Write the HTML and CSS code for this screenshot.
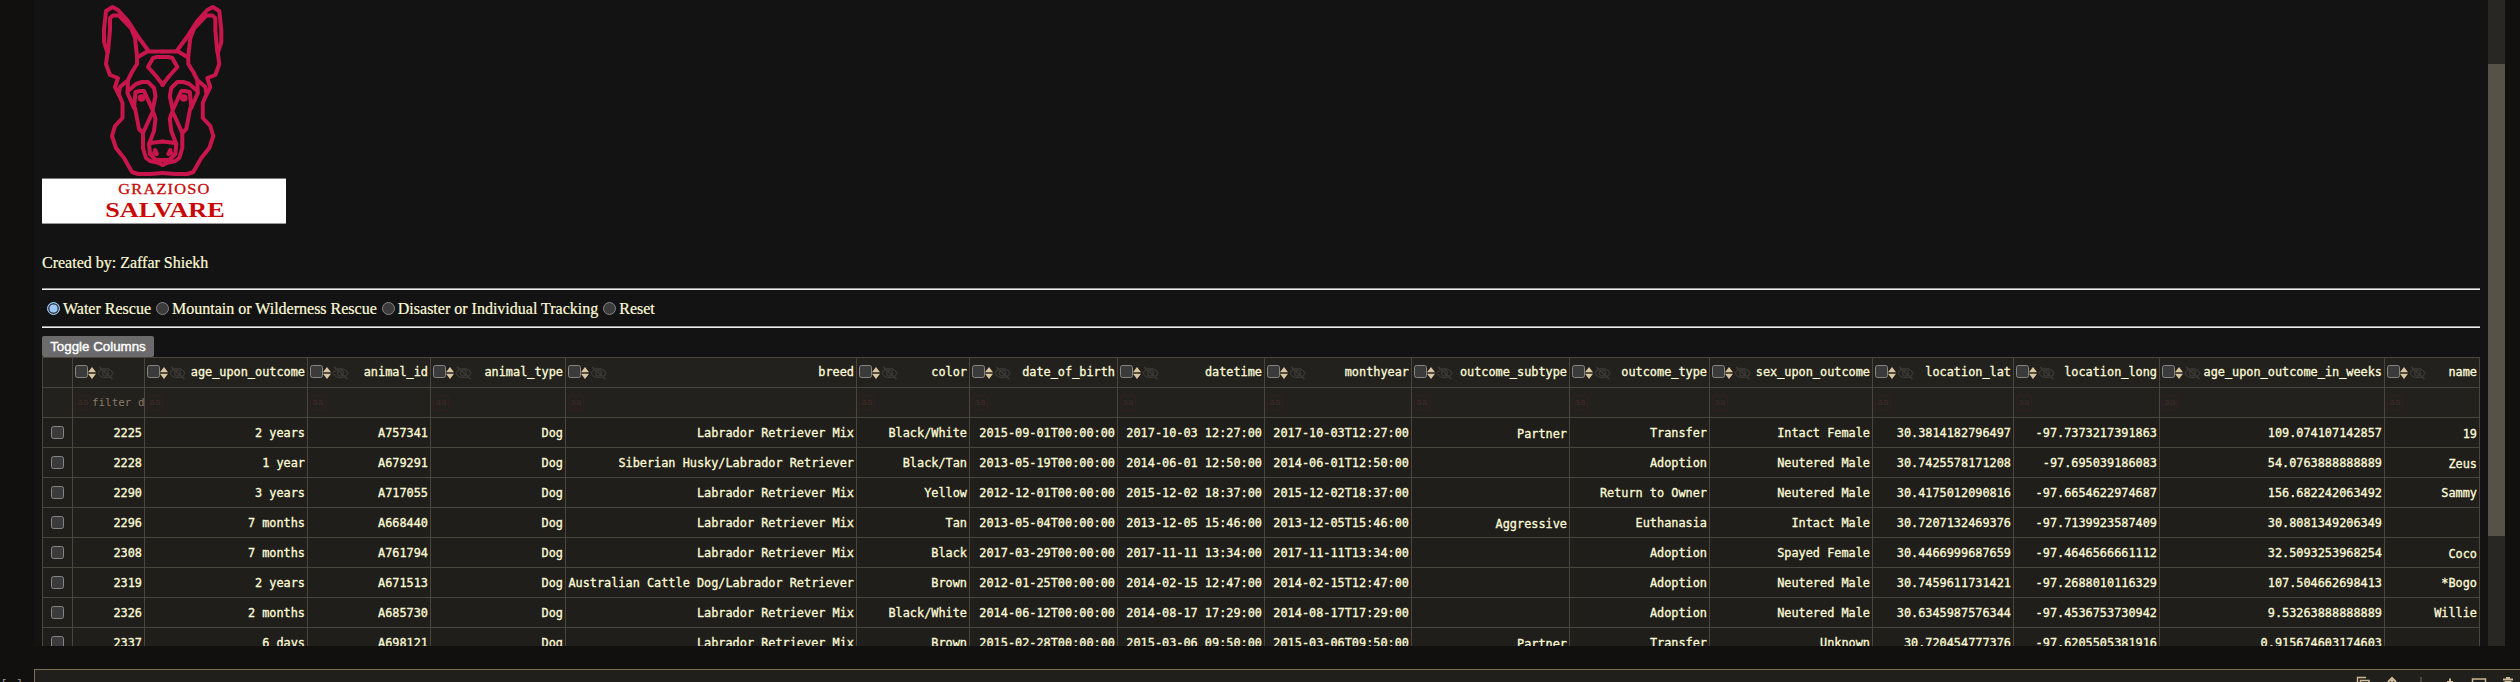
FILE: index.html
```html
<!DOCTYPE html>
<html lang="en">
<head>
<meta charset="utf-8">
<title>Grazioso Salvare</title>
<link rel="stylesheet" href="styles.css">
</head>
<body>
<svg class="defs" width="0" height="0">
  <symbol id="sort" viewBox="0 0 8 12"><path d="M4 0L8 5.3H0zM4 12L0 6.700h8z" fill="#d9c5a0"/></symbol>
  <symbol id="hide" viewBox="0 0 17 14"><g fill="none" stroke="#3a3833" stroke-width="1.3"><path d="M1 7.2C4 1 13 1 16 7.2C13 13 4 13 1 7.2z"/><circle cx="8.5" cy="7" r="3"/><path d="M2 .8L15.5 13.2" stroke-width="1.7"/></g></symbol>
</svg>
<div class="notebook">
  <main class="output">
    <div class="content">
      <div class="logo">
        <svg class="dog" viewBox="0 0 150 178" width="150" height="178">
          <g id="face" fill="none" stroke="#c8164d" stroke-width="4" stroke-linejoin="round" stroke-linecap="round">
            <g id="half">
              <path d="M73 51.5H59L49 38L38 21L28 10L22.500 7L16 11L15 20L14 30V42L17.500 53L16 64L20 75L28 78L25 87L30 97L32.500 103V118L25 126L22 136L26 148L34 158L42 172L48 174H60L73 173"/>
              <path d="M18 52L20 30V18L23 15.500H29L41 28L45 38L47 56V64L42 72L38 80L37.500 93L44 108L45.500 92L50 91L54 91L63 111L58 122L53 133L49 129L45 108"/>
              <path d="M48 57L58 51M37 81L30 87L29 93M38 91L46 84L52 82H58L64 88L65.500 96L63 108M64 114L65.500 119L64 131L59 144L60 154L66 160H73"/>
              <path d="M53 133V148L56 158L60 161L67 162.500L73 165M60 143L73 141.500M73 85L66 76L58 67L63 58L67 57H73"/>
              <circle cx="51.500" cy="98" r="2" fill="#c8164d" stroke-width="3.500"/>
              <path d="M65 150L67 154L64 153" stroke-width="4"/>
            </g>
            <use href="#half" transform="translate(145.300 0) scale(-1 1)"/>
            <circle cx="72.700" cy="162.500" r="2.300" stroke-width="3"/>
          </g>
        </svg>
        <div class="nameplate"><span class="small">GRAZIOSO</span><span class="big">SALVARE</span></div>
      </div>
      <p class="author">Created by: Zaffar Shiekh</p>
      <hr>
      <div class="filters">
        <label><span class="radio on"></span>Water Rescue</label>
        <label><span class="radio"></span>Mountain or Wilderness Rescue</label>
        <label><span class="radio"></span>Disaster or Individual Tracking</label>
        <label><span class="radio"></span>Reset</label>
      </div>
      <hr>
      <button class="toggle">Toggle Columns</button>
      <table>
        <colgroup><col style="width:30px"><col style="width:72px"><col style="width:163px"><col style="width:123px"><col style="width:135px"><col style="width:291px"><col style="width:113px"><col style="width:148px"><col style="width:147px"><col style="width:147px"><col style="width:158px"><col style="width:140px"><col style="width:163px"><col style="width:141px"><col style="width:146px"><col style="width:225px"><col style="width:95px"></colgroup>
        <thead>
        <tr>
          <th></th>
          <th><div class="head"><i class="box"></i><svg class="sort"><use href="#sort"/></svg><svg class="hide"><use href="#hide"/></svg></div></th>
          <th><div class="head"><i class="box"></i><svg class="sort"><use href="#sort"/></svg><svg class="hide"><use href="#hide"/></svg><span>age_upon_outcome</span></div></th>
          <th><div class="head"><i class="box"></i><svg class="sort"><use href="#sort"/></svg><svg class="hide"><use href="#hide"/></svg><span>animal_id</span></div></th>
          <th><div class="head"><i class="box"></i><svg class="sort"><use href="#sort"/></svg><svg class="hide"><use href="#hide"/></svg><span>animal_type</span></div></th>
          <th><div class="head"><i class="box"></i><svg class="sort"><use href="#sort"/></svg><svg class="hide"><use href="#hide"/></svg><span>breed</span></div></th>
          <th><div class="head"><i class="box"></i><svg class="sort"><use href="#sort"/></svg><svg class="hide"><use href="#hide"/></svg><span>color</span></div></th>
          <th><div class="head"><i class="box"></i><svg class="sort"><use href="#sort"/></svg><svg class="hide"><use href="#hide"/></svg><span>date_of_birth</span></div></th>
          <th><div class="head"><i class="box"></i><svg class="sort"><use href="#sort"/></svg><svg class="hide"><use href="#hide"/></svg><span>datetime</span></div></th>
          <th><div class="head"><i class="box"></i><svg class="sort"><use href="#sort"/></svg><svg class="hide"><use href="#hide"/></svg><span>monthyear</span></div></th>
          <th><div class="head"><i class="box"></i><svg class="sort"><use href="#sort"/></svg><svg class="hide"><use href="#hide"/></svg><span>outcome_subtype</span></div></th>
          <th><div class="head"><i class="box"></i><svg class="sort"><use href="#sort"/></svg><svg class="hide"><use href="#hide"/></svg><span>outcome_type</span></div></th>
          <th><div class="head"><i class="box"></i><svg class="sort"><use href="#sort"/></svg><svg class="hide"><use href="#hide"/></svg><span>sex_upon_outcome</span></div></th>
          <th><div class="head"><i class="box"></i><svg class="sort"><use href="#sort"/></svg><svg class="hide"><use href="#hide"/></svg><span>location_lat</span></div></th>
          <th><div class="head"><i class="box"></i><svg class="sort"><use href="#sort"/></svg><svg class="hide"><use href="#hide"/></svg><span>location_long</span></div></th>
          <th><div class="head"><i class="box"></i><svg class="sort"><use href="#sort"/></svg><svg class="hide"><use href="#hide"/></svg><span>age_upon_outcome_in_weeks</span></div></th>
          <th><div class="head"><i class="box"></i><svg class="sort"><use href="#sort"/></svg><svg class="hide"><use href="#hide"/></svg><span>name</span></div></th>
        </tr>
        <tr class="filter">
          <th></th>
          <th><div class="find"><b>aa</b><span>filter d</span></div></th>
          <th><div class="find"><b>aa</b></div></th><th><div class="find"><b>aa</b></div></th><th><div class="find"><b>aa</b></div></th><th><div class="find"><b>aa</b></div></th><th><div class="find"><b>aa</b></div></th><th><div class="find"><b>aa</b></div></th><th><div class="find"><b>aa</b></div></th><th><div class="find"><b>aa</b></div></th><th><div class="find"><b>aa</b></div></th><th><div class="find"><b>aa</b></div></th><th><div class="find"><b>aa</b></div></th><th><div class="find"><b>aa</b></div></th><th><div class="find"><b>aa</b></div></th><th><div class="find"><b>aa</b></div></th><th><div class="find"><b>aa</b></div></th>
        </tr>
        </thead>
        <tbody>
        <tr><td><i class="box"></i></td><td>2225</td><td>2 years</td><td>A757341</td><td>Dog</td><td>Labrador Retriever Mix</td><td>Black/White</td><td>2015-09-01T00:00:00</td><td>2017-10-03 12:27:00</td><td>2017-10-03T12:27:00</td><td class="low">Partner</td><td>Transfer</td><td>Intact Female</td><td>30.3814182796497</td><td>-97.7373217391863</td><td>109.074107142857</td><td class="low">19</td></tr>
        <tr><td><i class="box"></i></td><td>2228</td><td>1 year</td><td>A679291</td><td>Dog</td><td>Siberian Husky/Labrador Retriever</td><td>Black/Tan</td><td>2013-05-19T00:00:00</td><td>2014-06-01 12:50:00</td><td>2014-06-01T12:50:00</td><td></td><td>Adoption</td><td>Neutered Male</td><td>30.7425578171208</td><td>-97.695039186083</td><td>54.0763888888889</td><td class="low">Zeus</td></tr>
        <tr><td><i class="box"></i></td><td>2290</td><td>3 years</td><td>A717055</td><td>Dog</td><td>Labrador Retriever Mix</td><td>Yellow</td><td>2012-12-01T00:00:00</td><td>2015-12-02 18:37:00</td><td>2015-12-02T18:37:00</td><td></td><td>Return to Owner</td><td>Neutered Male</td><td>30.4175012090816</td><td>-97.6654622974687</td><td>156.682242063492</td><td>Sammy</td></tr>
        <tr><td><i class="box"></i></td><td>2296</td><td>7 months</td><td>A668440</td><td>Dog</td><td>Labrador Retriever Mix</td><td>Tan</td><td>2013-05-04T00:00:00</td><td>2013-12-05 15:46:00</td><td>2013-12-05T15:46:00</td><td class="low">Aggressive</td><td>Euthanasia</td><td>Intact Male</td><td>30.7207132469376</td><td>-97.7139923587409</td><td>30.8081349206349</td><td></td></tr>
        <tr><td><i class="box"></i></td><td>2308</td><td>7 months</td><td>A761794</td><td>Dog</td><td>Labrador Retriever Mix</td><td>Black</td><td>2017-03-29T00:00:00</td><td>2017-11-11 13:34:00</td><td>2017-11-11T13:34:00</td><td></td><td>Adoption</td><td>Spayed Female</td><td>30.4466999687659</td><td>-97.4646566661112</td><td>32.5093253968254</td><td class="low">Coco</td></tr>
        <tr><td><i class="box"></i></td><td>2319</td><td>2 years</td><td>A671513</td><td>Dog</td><td>Australian Cattle Dog/Labrador Retriever</td><td>Brown</td><td>2012-01-25T00:00:00</td><td>2014-02-15 12:47:00</td><td>2014-02-15T12:47:00</td><td></td><td>Adoption</td><td>Neutered Male</td><td>30.7459611731421</td><td>-97.2688010116329</td><td>107.504662698413</td><td>*Bogo</td></tr>
        <tr><td><i class="box"></i></td><td>2326</td><td>2 months</td><td>A685730</td><td>Dog</td><td>Labrador Retriever Mix</td><td>Black/White</td><td>2014-06-12T00:00:00</td><td>2014-08-17 17:29:00</td><td>2014-08-17T17:29:00</td><td></td><td>Adoption</td><td>Neutered Male</td><td>30.6345987576344</td><td>-97.4536753730942</td><td>9.53263888888889</td><td>Willie</td></tr>
        <tr><td><i class="box"></i></td><td>2337</td><td>6 days</td><td>A698121</td><td>Dog</td><td>Labrador Retriever Mix</td><td>Brown</td><td>2015-02-28T00:00:00</td><td>2015-03-06 09:50:00</td><td>2015-03-06T09:50:00</td><td class="low">Partner</td><td>Transfer</td><td>Unknown</td><td>30.720454777376</td><td>-97.6205505381916</td><td>0.915674603174603</td><td></td></tr>
        </tbody>
      </table>
    </div>
    <div class="scrollbar"><div class="thumb"></div></div>
  </main>
  <div class="next">
    <div class="prompt">[ ]:</div>
    <div class="cell">
      <svg width="170" height="12" viewBox="2350 670 170 12" fill="none" stroke="#cbb894" stroke-width="1.500">
        <path d="M2357.500 682V677.500H2366M2360.500 682V680.500H2369V690M2362.500 690V683.500"/>
        <path d="M2392 684V678.500M2388 682L2392 678L2396 682" stroke-width="2"/>
        <path d="M2421 677V690" stroke="#5b5446"/>
        <path d="M2450 678.500V690M2447 682H2453" stroke-width="2"/>
        <path d="M2472.500 690V679H2485.500V690"/>
        <path d="M2503 679.500H2513M2506 678H2510M2504.500 682H2511.500" stroke-width="2"/>
      </svg>
    </div>
  </div>
</div>
</body>
</html>
```
FILE: styles.css
```css
* { box-sizing: border-box; }
body { margin: 0; background: #11100e; overflow: hidden; }
.defs { display: block; width: 0; height: 0; }
.notebook { width: 2520px; height: 682px; overflow: hidden; display: flex; flex-direction: column; background: #11100e; }
.output { flex: none; height: 646px; margin-left: 34px; width: 2471px; display: flex; background: #131313; overflow: hidden; }
.content { width: 2454px; padding-left: 8px; flex: none; font: 16px "Liberation Serif", "Times New Roman", serif; color: #fdfbd8; -webkit-text-stroke: .2px #fdfbd8; }
.scrollbar { width: 17px; background: #282722; padding-top: 64px; }
.thumb { height: 472px; background: #575247; }
.logo { width: 244px; height: 224px; display: flex; flex-direction: column; }
.dog { display: block; margin-left: 48px; flex: none; }
.nameplate { height: 46px; flex: none; background: #fff; border-top: 1px solid #777; border-bottom: 1px solid #999; color: #c90808; display: flex; flex-direction: column; align-items: center; padding: 2px 0 0 1px; font-family: "Liberation Serif", serif; -webkit-text-stroke: 0; }
.small { font-size: 14px; line-height: 17px; letter-spacing: 1px; transform: scaleX(1.17); -webkit-text-stroke: .3px #c90808; }
.big { font-size: 21.500px; line-height: 25px; font-weight: bold; transform: scaleX(1.22); }
.author { margin: 29px 0 16px; line-height: 19px; }
hr { width: 2438px; height: 2px; margin: 0; border: 0; border-top: 1px solid #9a9a9a; background: #eee; }
.filters { height: 36px; display: flex; padding: 10px 0 0 5px; line-height: 18px; gap: 5px; }
.filters label { display: flex; white-space: nowrap; }
.radio { width: 13px; height: 13px; border: 1px solid #858585; border-radius: 50%; background: #3b3b3b; margin: 2px 3px 0 0; flex: none; }
.radio.on { border-color: #99c8ff; background: #99c8ff; box-shadow: inset 0 0 0 1.500px #3b3b3b; }
.toggle { display: block; width: 112px; height: 21px; margin: 8px 0 0; padding: 0; border: 0; border-radius: 2px; background: #6b6b6b; color: #fff; font: 13.333px/21px "Liberation Sans", Arial, sans-serif; -webkit-text-stroke: .4px #fff; }
table { table-layout: fixed; width: 2438px; border-collapse: collapse; font: 11.870px "DejaVu Sans Mono", monospace; color: #fdfbd8; background: #1f1e1a; -webkit-text-stroke: .3px #fdfbd8; }
th, td { height: 30px; padding: 0 2px 0 2px; border: 1px solid #4a463e; text-align: right; font-weight: normal; white-space: nowrap; line-height: 14px; }
th { background: #22211d; }
.low { padding-top: 2px; }
.box { display: block; width: 13px; height: 13px; border: 1px solid #858585; border-radius: 2.500px; background: #3b3b3b; flex: none; }
td .box { margin: 0 0 0 6px; }
.head { display: flex; align-items: center; height: 29px; }
.head .box { margin-bottom: 2px; }
.head span { margin: 0 0 1px auto; }
.sort { width: 8px; height: 12px; flex: none; }
.hide { width: 17px; height: 14px; margin-left: 1px; flex: none; }
.find { display: flex; align-items: center; height: 29px; font-size: 10.900px; color: #8a7a66; -webkit-text-stroke: 0; }
.find b { width: 16px; height: 16px; border: 1px solid #321f1d; border-radius: 2px; color: #402a28; font-size: 9px; line-height: 13px; text-align: center; font-weight: normal; margin-right: 1px; flex: none; }
.find span { width: 51px; margin-right: -2px; flex: none; text-align: left; }
.next { margin-top: 23px; height: 13px; display: flex; overflow: hidden; }
.prompt { width: 34px; flex: none; color: #8a8a8a; font: 13px/32px "DejaVu Sans Mono", monospace; white-space: nowrap; overflow: hidden; }
.cell { flex: 1; border-top: 1px solid #7b6e57; border-left: 1px solid #7b6e57; background: #211f1b; display: flex; justify-content: flex-end; }
```
